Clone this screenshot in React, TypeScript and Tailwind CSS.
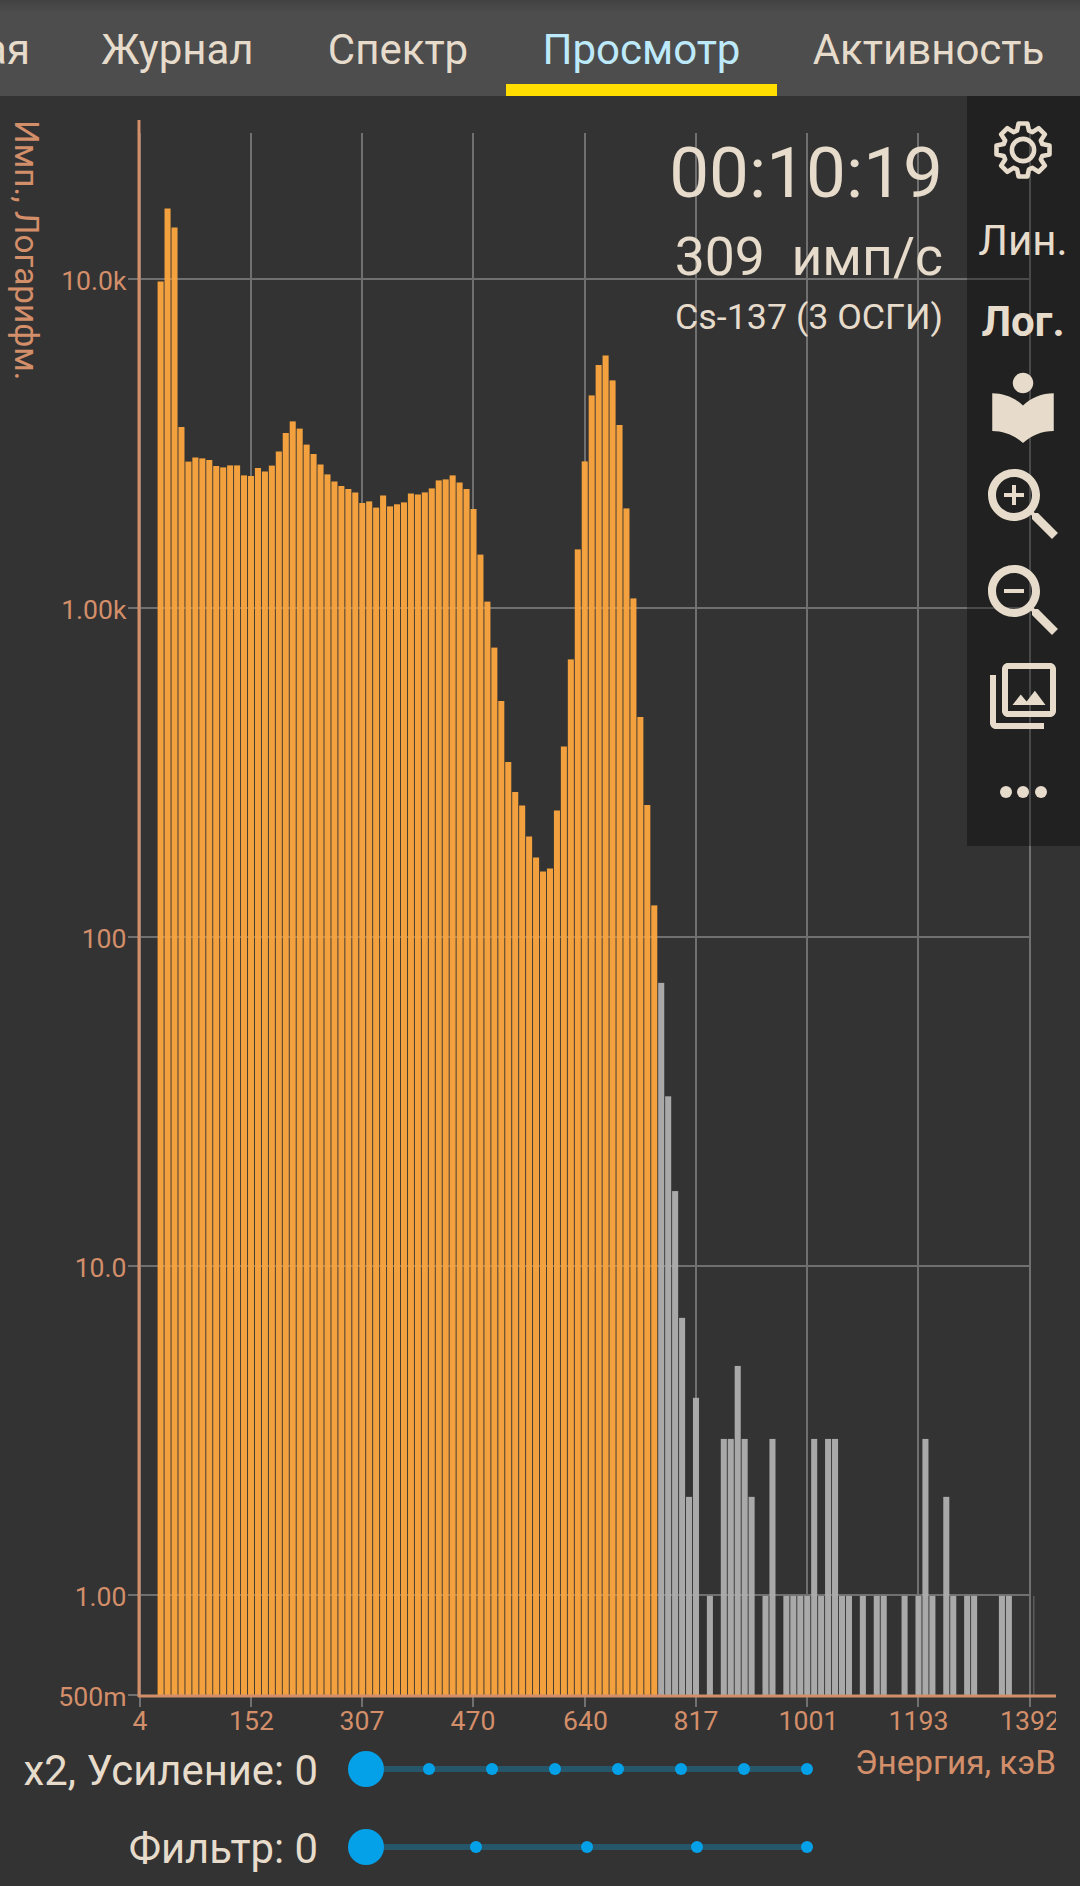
import React, { useState } from 'react';

const TABS = [
    { id: 'journal', label: 'Журнал', width: 'w-[225px]' },
    { id: 'spectrum', label: 'Спектр', width: 'w-[216px]' },
    { id: 'view', label: 'Просмотр', width: 'w-[271px]' },
    { id: 'activity', label: 'Активность', width: 'w-[303px]' },
];

// Chart geometry, in svg pixels
const ORIGIN_X = 139.75;
const STEP = 6.953;
const BAR_WIDTH = 6.05;
const BASE_Y = 1599;
const UNIT_Y = 1499.5;
const DECADE = 329;

const GRID_X = [140, 251, 362, 473, 585, 696, 807, 918, 1030];
const X_LABELS = [
    { x: 140, label: '4' },
    { x: 251.5, label: '152' },
    { x: 362, label: '307' },
    { x: 473, label: '470' },
    { x: 585.5, label: '640' },
    { x: 696, label: '817' },
    { x: 808.5, label: '1001' },
    { x: 918.5, label: '1193' },
    { x: 1030, label: '1392' },
];
const Y_TICKS = [
    { y: 183, label: '10.0k' },
    { y: 512, label: '1.00k' },
    { y: 841, label: '100' },
    { y: 1170, label: '10.0' },
    { y: 1499, label: '1.00' },
    { y: 1599, label: '500m' },
];

// Tops of the bars inside the region of interest, starting at channel 3
const ROI_TOPS = [
    185.5, 112.5, 131.5, 331, 365.6, 361.5, 362.4, 364, 370, 371.4, 369.4, 369.4, 379.4, 380, 372, 375.5,
    369.6, 355.5, 337, 325.4, 332.6, 348.6, 358, 368.5, 378.4, 385.5, 390, 393, 396.5, 407, 405.4, 411.6,
    399.5, 410.4, 408.3, 406.4, 397.5, 398.5, 396.4, 392.4, 384.4, 383.4, 379.4, 386.5, 393, 413, 458.6, 505.6,
    551.6, 605, 666, 696, 709.5, 740.5, 761.5, 775.5, 772.5, 714.5, 650.5, 563.4, 453.4, 365.4, 299.4, 269,
    259.5, 284.4, 329, 412.4, 502.4, 621, 709, 809.4,
];
const ROI_START = 3;

// channel -> counts, right of the region of interest
const TAIL: [number, number][] = [
    [75, 73], [76, 33], [77, 17], [78, 7], [79, 2], [80, 4], [82, 1], [84, 3], [85, 3], [86, 5], [87, 3],
    [88, 2], [90, 1], [91, 3], [93, 1], [94, 1], [95, 1], [96, 1], [97, 3], [98, 1], [99, 3], [100, 3],
    [101, 1], [102, 1], [104, 1], [106, 1], [107, 1], [110, 1], [112, 1], [113, 3], [114, 1], [116, 2],
    [117, 1], [119, 1], [120, 1], [124, 1], [125, 1], [129, 1],
];

const barX = (channel: number) => ORIGIN_X + channel * STEP - BAR_WIDTH / 2;
const countY = (count: number) => UNIT_Y + 0.4 - DECADE * Math.log10(count);

function SpectrumChart() {
    return (
        <svg width="1056" height="1640" viewBox="0 0 1056 1640" className="block shrink-0 overflow-hidden">
            <g fill="#707070">
                {GRID_X.map(x => (
                    <rect key={x} x={x - 1} y={37} width={2} height={1574} />
                ))}
                {Y_TICKS.slice(0, 5).map(t => (
                    <rect key={t.y} x={128} y={t.y - 1} width={903} height={2} />
                ))}
                <rect x={128} y={1598} width={12} height={2} />
            </g>

            <g fill="#fba63e" fillOpacity={0.96}>
                {ROI_TOPS.map((top, i) => (
                    <rect key={i} x={barX(ROI_START + i)} y={top} width={BAR_WIDTH} height={BASE_Y - top} />
                ))}
            </g>
            <g fill="#aeaeae" fillOpacity={0.96}>
                {TAIL.map(([channel, count]) => (
                    <rect
                        key={channel}
                        x={barX(channel)}
                        y={countY(count)}
                        width={channel === 129 ? 0.5 : BAR_WIDTH}
                        height={BASE_Y - countY(count)}
                    />
                ))}
            </g>

            {/* Axes */}
            <g stroke="#d38e6a" strokeWidth={3}>
                <line x1={139} y1={24} x2={139} y2={1601} />
                <line x1={138} y1={1600} x2={1056} y2={1600} />
            </g>

            {/* Labels */}
            <g fill="#d38e6a" fontSize={26.6}>
                {Y_TICKS.map(t => (
                    <text key={t.label} x={126.5} y={t.y + 11} textAnchor="end">{t.label}</text>
                ))}
                {X_LABELS.map(t => (
                    <text key={t.label} x={t.x} y={1634} textAnchor="middle">{t.label}</text>
                ))}
            </g>
            <text transform="translate(14.5 24) rotate(90)" fill="#d38e6a" fontSize={33.2}>Имп., Логарифм.</text>
        </svg>
    );
}

function GearIcon() {
    const points: string[] = [];
    for (let i = 0; i < 8; i++) {
        const a = (i * Math.PI) / 4;
        [[-6, -19.3], [-4.4, -26.5], [4.4, -26.5], [6, -19.3]].forEach(([x, y]) => {
            points.push(`${x * Math.cos(a) - y * Math.sin(a)},${x * Math.sin(a) + y * Math.cos(a)}`);
        });
    }
    return (
        <svg width="60" height="60" viewBox="-30 -30 60 60" fill="none" stroke="currentColor" strokeWidth={4.6}>
            <polygon points={points.join(' ')} strokeLinejoin="round" />
            <circle r={11.1} />
        </svg>
    );
}

interface IconProps {
    d: string;
    size: number;
}

function Icon({ d, size }: IconProps) {
    return (
        <svg width={size} height={size} viewBox="0 0 24 24" fill="currentColor" className="block shrink-0">
            <path d={d} />
        </svg>
    );
}

const LIBRARY = 'M12 11.55C9.64 9.35 6.48 8 3 8v11c3.48 0 6.64 1.35 9 3.55 2.36-2.19 5.52-3.55 9-3.55V8c-3.48 0-6.64 1.35-9 3.55zM12 8c1.66 0 3-1.34 3-3s-1.34-3-3-3-3 1.34-3 3 1.34 3 3 3z';
const LENS = 'M15.5 14h-.79l-.28-.27C15.41 12.59 16 11.11 16 9.5 16 5.91 13.09 3 9.5 3S3 5.91 3 9.5 5.91 16 9.5 16c1.61 0 3.09-.59 4.23-1.57l.27.28v.79l5 4.99L20.49 19l-4.99-5zm-6 0C7.01 14 5 11.99 5 9.5S7.01 5 9.5 5 14 7.01 14 9.5 11.99 14 9.5 14z';
const GALLERY = 'M15.96 10.29l-2.75 3.54-1.96-2.36L8.5 15h11l-3.54-4.71zM3 5H1v16c0 1.1.9 2 2 2h16v-2H3V5zm18-4H7c-1.1 0-2 .9-2 2v14c0 1.1.9 2 2 2h14c1.1 0 2-.9 2-2V3c0-1.1-.9-2-2-2zm0 16H7V3h14v14z';

function SidePanel() {
    const [scale, setScale] = useState<'lin' | 'log'>('log');

    return (
        <div className="absolute right-0 top-0 flex h-[750px] w-[113px] flex-col items-center bg-black/35 pr-px">
            <button className="mt-[24px] h-[60px]">
                <GearIcon />
            </button>
            <button
                onClick={() => setScale('lin')}
                className={`mt-[36px] h-[50px] text-[42px] leading-[50px] ${scale === 'lin' ? 'font-bold' : ''}`}
            >
                Лин.
            </button>
            <button
                onClick={() => setScale('log')}
                className={`mt-[31px] h-[50px] text-[42px] leading-[50px] ${scale === 'log' ? 'font-bold' : ''}`}
            >
                Лог.
            </button>
            <button className="mt-[19px]">
                <Icon d={LIBRARY} size={82} />
            </button>
            <button className="ml-[2px] mt-[9px]">
                <Icon d={`${LENS}M12 10h-2v2H9v-2H7V9h2V7h1v2h2v1z`} size={96} />
            </button>
            <button className="ml-[2px]">
                <Icon d={`${LENS}M7 9h5v1H7z`} size={96} />
            </button>
            <button className="mt-[11px]">
                <Icon d={GALLERY} size={72} />
            </button>
            <button className="mt-[54px] flex gap-[5.5px]">
                <span className="size-[12px] rounded-full bg-current" />
                <span className="size-[12px] rounded-full bg-current" />
                <span className="size-[12px] rounded-full bg-current" />
            </button>
        </div>
    );
}

interface StepSliderProps {
    label: string;
    steps: number;
}

function StepSlider({ label, steps }: StepSliderProps) {
    return (
        <>
            <div className="w-[318px] shrink-0 whitespace-pre pt-[4px] text-right text-[41.8px] leading-[50px]">{label}</div>
            <div className="ml-[30px] flex h-[36px] w-[465px] shrink-0 items-center justify-between bg-[linear-gradient(#265669,#265669)] bg-[length:441px_6px] bg-[position:18px_15px] bg-no-repeat">
                {Array.from({ length: steps }, (_, i) => (
                    <div key={i} className="flex size-[12px] items-center justify-center first:ml-[12px]">
                        <div className={`shrink-0 rounded-full bg-[#05a1e8] ${i === 0 ? 'size-[36px]' : 'size-[12px]'}`} />
                    </div>
                ))}
            </div>
        </>
    );
}

export default function App() {
    const [activeTab, setActiveTab] = useState('view');

    return (
        <div className="flex h-[1886px] w-[1080px] flex-col overflow-hidden bg-[#333333] font-[Roboto,'Noto_Sans',sans-serif] text-[#e7dccb]">
            {/* Tabs */}
            <nav className="flex h-[96px] shrink-0 overflow-hidden bg-[linear-gradient(#424242,#4d4d4d_14px)] text-[42px] leading-[50px]">
                <div className="flex w-[65px] shrink-0 justify-end pr-[35px] pt-[25px]">ая</div>
                {TABS.map(tab => (
                    <button
                        key={tab.id}
                        onClick={() => setActiveTab(tab.id)}
                        className={`flex shrink-0 justify-center border-b-[12px] pt-[25px] ${tab.width} ${
                            activeTab === tab.id ? 'border-[#ffde00] text-[#bdeafa]' : 'border-transparent'
                        }`}
                    >
                        {tab.label}
                    </button>
                ))}
            </nav>

            {/* Spectrum */}
            <main className="relative flex h-[1640px] shrink-0">
                <SpectrumChart />
                <div className="absolute right-[137px] top-[35px] flex flex-col items-end whitespace-pre">
                    <div className="text-[71px] leading-[84px]">00:10:19</div>
                    <div className="mt-[10px] text-[53.5px] leading-[64px]">309  имп/с</div>
                    <div className="mt-[7px] text-[35.8px] leading-[42px]">Cs-137 (3 ОСГИ)</div>
                </div>
                <SidePanel />
            </main>

            {/* Controls */}
            <div className="flex h-[66px] shrink-0 items-center">
                <StepSlider label="x2, Усиление: 0" steps={8} />
                <div className="mb-[12px] ml-auto mr-[24px] whitespace-nowrap text-[33.3px] leading-[38px] text-[#d38e6a]">Энергия, кэВ</div>
            </div>
            <div className="flex h-[90px] shrink-0 items-center">
                <StepSlider label="Фильтр: 0" steps={5} />
            </div>
        </div>
    );
}
